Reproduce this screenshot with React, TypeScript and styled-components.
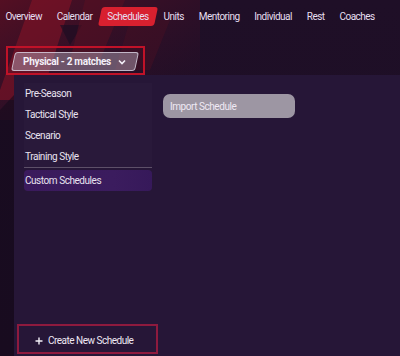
import React from "react";
import styled, { createGlobalStyle } from "styled-components";

const Global = createGlobalStyle`
  html, body { margin: 0; padding: 0; background: #1c0e24; }
  * { box-sizing: border-box; }
`;

const Screen = styled.div`
  position: relative;
  width: 400px;
  height: 356px;
  overflow: hidden;
  background: linear-gradient(180deg, #1f0f27 0%, #1c0e25 100%);
  font-family: "Roboto", "Liberation Sans", sans-serif;
  letter-spacing: -0.45px;
  color: #ece6f2;
  display: flex;
  flex-direction: column;
`;

const Backdrop = styled.svg`
  position: absolute;
  left: 0;
  top: 0;
  width: 400px;
  height: 356px;
  z-index: 0;
  pointer-events: none;
`;

const Layer = styled.div`
  position: relative;
  z-index: 1;
  display: flex;
  flex-direction: column;
  flex: 1;
  min-height: 0;
`;

const Nav = styled.nav`
  display: flex;
  align-items: center;
  height: 19px;
  margin-top: 7px;
  margin-left: -2px;
`;

const NavItem = styled.div<{ $active?: boolean }>`
  position: relative;
  height: 19px;
  padding: 0 7.4px;
  display: flex;
  align-items: center;
  font-size: 10px;
  letter-spacing: -0.5px;
  color: #e6dff0;
  white-space: nowrap;
  &::before {
    content: "";
    position: absolute;
    inset: 0;
    border-radius: 3px;
    background: ${(p) => (p.$active ? "#d8202f" : "transparent")};
    transform: skewX(-12deg);
    z-index: -1;
  }
`;

const DropdownFrame = styled.div`
  margin: 20px 0 0 6px;
  width: 139px;
  height: 29px;
  border: 2px solid #c01228;
  padding: 4px 0 0 5px;
`;

const DropdownButton = styled.div`
  position: relative;
  width: 124px;
  height: 19px;
  display: flex;
  align-items: center;
  padding-left: 10px;
  gap: 7px;
  font-size: 10px;
  font-weight: 700;
  letter-spacing: -0.3px;
  color: #f4f0f8;
  &::before {
    content: "";
    position: absolute;
    inset: 0;
    border-radius: 3px;
    background: rgba(190, 180, 200, 0.42);
    border: 1px solid rgba(230, 225, 240, 0.7);
    transform: skewX(-12deg);
    z-index: -1;
  }
`;

const Panel = styled.div`
  flex: 1;
  margin-left: 14px;
  background: #261637;
  display: grid;
  grid-template-columns: 138px 1fr;
  min-height: 0;
`;

const Side = styled.div`
  display: flex;
  flex-direction: column;
  padding: 8px 0 2px 10px;
`;

const List = styled.div`
  display: flex;
  flex-direction: column;
`;

const ListItem = styled.div<{ $selected?: boolean }>`
  height: 21px;
  display: flex;
  align-items: center;
  padding-left: 1px;
  font-size: 10px;
  color: #e8e2f0;
  border-radius: ${(p) => (p.$selected ? "4px" : "0")};
  background: ${(p) =>
    p.$selected
      ? "linear-gradient(90deg, #3a1a5c 0%, #3b1c5e 70%, #36195a 100%)"
      : "rgba(255,255,255,0.015)"};
  margin-top: ${(p) => (p.$selected ? "2px" : "0")};
  white-space: nowrap;
`;

const Divider = styled.div`
  height: 1px;
  background: #5d5068;
`;

const CreateFrame = styled.div`
  margin-top: auto;
  margin-left: -7px;
  width: 141px;
  height: 30px;
  border: 2px solid #8e1a3e;
  padding: 5px 0 0 5px;
`;

const CreateButton = styled.div`
  position: relative;
  width: 129px;
  height: 19px;
  display: flex;
  align-items: center;
  padding-left: 11px;
  gap: 5px;
  font-size: 10px;
  letter-spacing: -0.5px;
  color: #eee8f4;
  &::before {
    content: "";
    position: absolute;
    inset: 0;
    border-radius: 3px;
    background: #1f1032;
    border: 1px solid #cfc8d8;
    transform: skewX(-12deg);
    z-index: -1;
  }
`;

const Main = styled.div`
  padding: 19px 0 0 11px;
`;

const ImportButton = styled.div`
  width: 132px;
  height: 24px;
  border-radius: 7px;
  background: #9d96a3;
  display: flex;
  align-items: center;
  padding-left: 7px;
  font-size: 10px;
  color: #efe9f4;
`;

const Chevron = () => (
  <svg width="8" height="6" viewBox="0 0 8 6">
    <path d="M1 1.5 L4 4.5 L7 1.5" fill="none" stroke="#f4f0f8" strokeWidth="1.6" />
  </svg>
);

const Plus = () => (
  <svg width="8" height="8" viewBox="0 0 8 8">
    <path d="M4 0.5 V7.5 M0.5 4 H7.5" stroke="#f4f0f8" strokeWidth="1.4" />
  </svg>
);

const navItems = ["Overview", "Calendar", "Schedules", "Units", "Mentoring", "Individual", "Rest", "Coaches"];
const listItems = ["Pre-Season", "Tactical Style", "Scenario", "Training Style"];

export default function App() {
  return (
    <Screen>
      <Global />
      <Backdrop viewBox="0 0 400 356">
        <defs>
          <linearGradient id="fade" x1="0" y1="0" x2="1" y2="1">
            <stop offset="0" stopColor="#5a0f22" stopOpacity="0.9" />
            <stop offset="1" stopColor="#2a0f2a" stopOpacity="0" />
          </linearGradient>
        </defs>
        <rect x="0" y="0" width="200" height="120" fill="url(#fade)" />
        <polygon points="32,0 72,0 40,100 0,100 0,90" fill="#8a1426" opacity="0.55" />
        <polygon points="60,25 82,25 70,45" fill="#1d0d22" opacity="0.7" />
        <polygon points="85,0 125,0 100,60 70,60" fill="#5c1022" opacity="0.5" />
        <polygon points="130,20 170,20 150,70 115,70" fill="#4a0f24" opacity="0.45" />
        <polygon points="0,110 14,95 14,356 0,356" fill="#160a1c" opacity="0.6" />
      </Backdrop>
      <Layer>
        <Nav>
          {navItems.map((n) => (
            <NavItem key={n} $active={n === "Schedules"}>
              {n}
            </NavItem>
          ))}
        </Nav>
        <DropdownFrame>
          <DropdownButton>
            Physical - 2 matches
            <Chevron />
          </DropdownButton>
        </DropdownFrame>
        <Panel>
          <Side>
            <List>
              {listItems.map((l) => (
                <ListItem key={l}>{l}</ListItem>
              ))}
              <Divider />
              <ListItem $selected>Custom Schedules</ListItem>
            </List>
            <CreateFrame>
              <CreateButton>
                <Plus />
                Create New Schedule
              </CreateButton>
            </CreateFrame>
          </Side>
          <Main>
            <ImportButton>Import Schedule</ImportButton>
          </Main>
        </Panel>
      </Layer>
    </Screen>
  );
}
